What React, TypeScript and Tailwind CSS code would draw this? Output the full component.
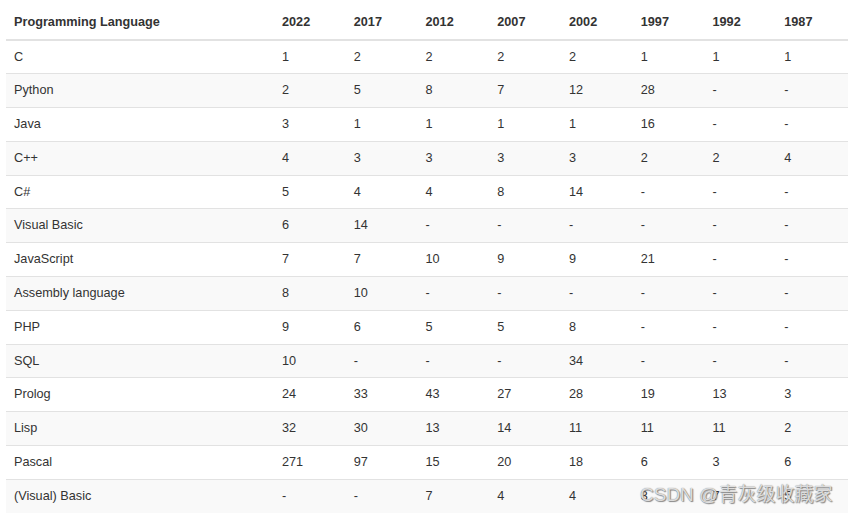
const years = ['2022', '2017', '2012', '2007', '2002', '1997', '1992', '1987'];

const rows: [string, string[]][] = [
  ['C', ['1', '2', '2', '2', '2', '1', '1', '1']],
  ['Python', ['2', '5', '8', '7', '12', '28', '-', '-']],
  ['Java', ['3', '1', '1', '1', '1', '16', '-', '-']],
  ['C++', ['4', '3', '3', '3', '3', '2', '2', '4']],
  ['C#', ['5', '4', '4', '8', '14', '-', '-', '-']],
  ['Visual Basic', ['6', '14', '-', '-', '-', '-', '-', '-']],
  ['JavaScript', ['7', '7', '10', '9', '9', '21', '-', '-']],
  ['Assembly language', ['8', '10', '-', '-', '-', '-', '-', '-']],
  ['PHP', ['9', '6', '5', '5', '8', '-', '-', '-']],
  ['SQL', ['10', '-', '-', '-', '34', '-', '-', '-']],
  ['Prolog', ['24', '33', '43', '27', '28', '19', '13', '3']],
  ['Lisp', ['32', '30', '13', '14', '11', '11', '11', '2']],
  ['Pascal', ['271', '97', '15', '20', '18', '6', '3', '6']],
  ['(Visual) Basic', ['-', '-', '7', '4', '4', '3', '7', '5']],
];

export default function App() {
  return (
    <div className="relative h-[513px] w-[850px] overflow-hidden bg-white pt-[3px] font-['Liberation_Sans',Arial,sans-serif] text-[12.7px] text-[#333]">
      <table className="ml-[6px] w-[842px] table-fixed border-collapse">
        <colgroup>
          <col className="w-[268px]" />
          {years.map((y) => (
            <col key={y} />
          ))}
        </colgroup>
        <thead>
          <tr className="border-b-2 border-[#e2e2e2]">
            <th className="h-[37px] px-2 pb-[8px] text-left align-bottom font-bold leading-[17px]">
              Programming Language
            </th>
            {years.map((y) => (
              <th key={y} className="h-[37px] px-2 pb-[8px] text-left align-bottom font-bold leading-[17px]">
                {y}
              </th>
            ))}
          </tr>
        </thead>
        <tbody>
          {rows.map(([name, ranks], i) => (
            <tr key={name} className={`border-b border-[#e2e2e2] ${i % 2 === 1 ? 'bg-[#f9f9f9]' : 'bg-white'}`}>
              <td className="h-[33.8px] px-2 py-0 align-middle leading-[17px]">{name}</td>
              {ranks.map((r, j) => (
                <td key={j} className="h-[33.8px] px-2 py-0 align-middle leading-[17px]">
                  {r}
                </td>
              ))}
            </tr>
          ))}
        </tbody>
      </table>
      {/* CSDN watermark over the last row */}
      <span className="pointer-events-none absolute left-[640px] top-[484px] whitespace-nowrap font-['Liberation_Sans','Noto_Sans_CJK_SC',sans-serif] text-[19px] leading-[22px] text-[rgba(255,255,255,0.75)] [text-shadow:0_0_1px_#666,1px_1px_1px_rgba(110,110,110,0.8)]">
        CSDN @青灰级收藏家
      </span>
    </div>
  );
}
